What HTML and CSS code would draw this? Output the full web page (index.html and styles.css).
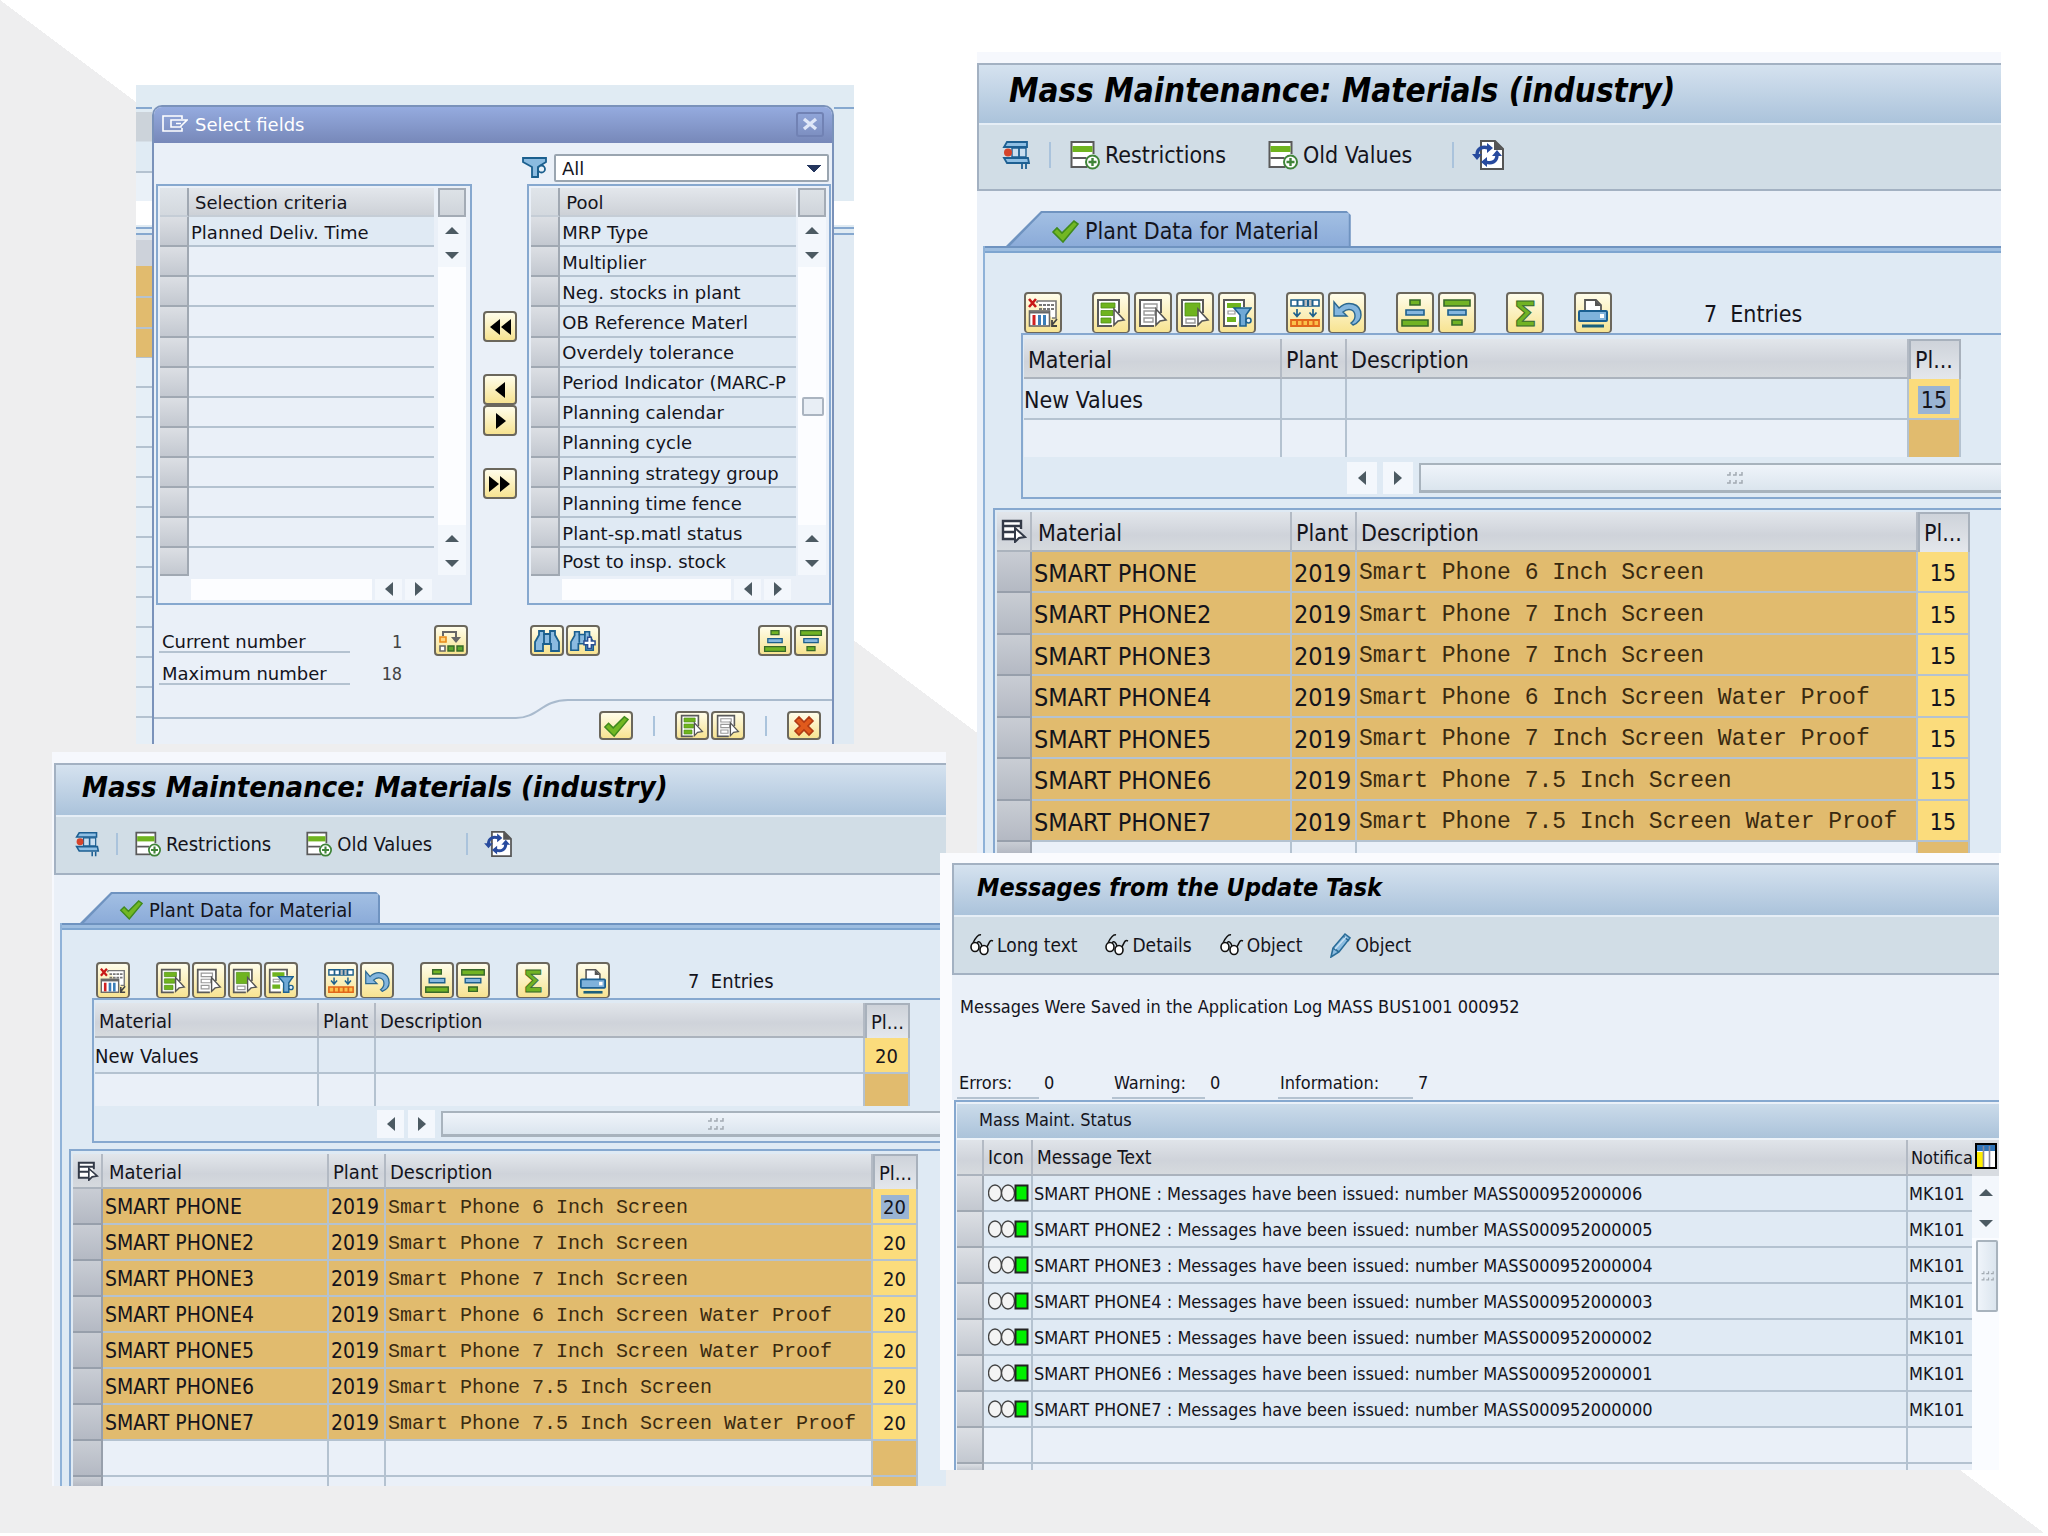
FILE: index.html
```html
<!DOCTYPE html>
<html lang="en">
<head>
<meta charset="utf-8">
<title>Mass Maintenance</title>
<link rel="stylesheet" href="styles.css">
</head>
<body>
<svg class="sprite" aria-hidden="true">
  <symbol id="i-layout" viewBox="0 0 30 30">
    <path d="M9 3h19v17h-4M9 3v2" fill="#fff" stroke="#777" stroke-width="1.6"/>
    <path d="M11 7h15M11 11h15" stroke="#777" stroke-width="2" stroke-dasharray="3 1"/>
    <rect x="1.5" y="13" width="20" height="15" fill="#fff" stroke="#666" stroke-width="1.6"/>
    <path d="M2 14.500h19" stroke="#666" stroke-width="2"/>
    <path d="M6 17v10" stroke="#d02020" stroke-width="3"/>
    <path d="M11.500 17v10M16.500 17v10" stroke="#3a7db8" stroke-width="3"/>
    <path d="M1 1l7 8M8 1l-7 8" stroke="#c81818" stroke-width="2.600"/>
    <path d="M29 21l-5 6M24 22v6h5" fill="none" stroke="#444" stroke-width="1.800"/>
  </symbol>
  <symbol id="i-selall" viewBox="0 0 30 30">
    <path d="M23 15V2H2v26h14" fill="#fff" stroke="#5a5a5a" stroke-width="2"/>
    <path d="M5 5h14v5H5zM5 12.500h12v5H5zM5 20h10v5H5z" fill="#6fb41f" stroke="#4f9016" stroke-width=".8"/>
    <path d="M18 11v16l4-4 6-1z" fill="#fff" stroke="#555" stroke-width="1.600"/>
  </symbol>
  <symbol id="i-selnone" viewBox="0 0 30 30">
    <path d="M23 15V2H2v26h14" fill="#fff" stroke="#5a5a5a" stroke-width="2"/>
    <path d="M6 6h13v4H6zM6 13h11v4H6zM6 20h9v4H6z" fill="#fff" stroke="#999" stroke-width="1.400"/>
    <path d="M18 11v16l4-4 6-1z" fill="#fff" stroke="#555" stroke-width="1.600"/>
  </symbol>
  <symbol id="i-selblock" viewBox="0 0 30 30">
    <path d="M23 15V2H2v26h14" fill="#fff" stroke="#5a5a5a" stroke-width="2"/>
    <path d="M5 5h15v13H5z" fill="#6fb41f" stroke="#4f9016" stroke-width=".8"/>
    <path d="M6 21h9v4H6z" fill="#fff" stroke="#999" stroke-width="1.400"/>
    <path d="M18 11v16l4-4 6-1z" fill="#fff" stroke="#555" stroke-width="1.600"/>
  </symbol>
  <symbol id="i-selfilter" viewBox="0 0 30 30">
    <path d="M22 9V2H2v26h13" fill="#fff" stroke="#5a5a5a" stroke-width="2"/>
    <path d="M5 5h14v5H5zM5 19h9v5H5z" fill="#6fb41f"/>
    <path d="M6 13h7v3H6z" fill="#fff" stroke="#999" stroke-width="1.200"/>
    <path d="M12 10h17l-5 7v11h-6V17z" fill="#6fa9d6" stroke="#1d618f" stroke-width="1.600"/>
    <circle cx="26.500" cy="22.500" r="2.500" fill="#e8f2fa" stroke="#1d618f" stroke-width="1.600"/>
  </symbol>
  <symbol id="i-fill" viewBox="0 0 30 30">
    <path d="M1 2h28v6H1z" fill="#fff" stroke="#1d5f8c" stroke-width="1.600"/>
    <path d="M14 2h8v6h-8z" fill="#bbb"/>
    <path d="M7.500 2v6M13.500 2v6M18 2v6M22.500 2v6" stroke="#1d5f8c" stroke-width="2"/>
    <path d="M7 11v7M3.500 14.500l3.500 4 3.500-4M23 11v7M19.500 14.500l3.500 4 3.500-4" fill="none" stroke="#1d5f8c" stroke-width="1.700"/>
    <path d="M1 22h28v6H1z" fill="#fbc04a" stroke="#e2661a" stroke-width="1.800"/>
    <path d="M7 22v6M12.500 22v6M18 22v6M23.500 22v6" stroke="#e2661a" stroke-width="2"/>
  </symbol>
  <symbol id="i-undo" viewBox="0 0 30 30">
    <path d="M2 4v14h13l-4-4c6-5 12-2 12 4 0 3-1 5-4 7l2 2c5-2 8-5 8-10C29 5 15 2 7 10z" fill="#84b6de" stroke="#2a678f" stroke-width="1.400"/>
  </symbol>
  <symbol id="i-asc" viewBox="0 0 30 30">
    <path d="M10 2h10v5H10zM2 22h26v6H2z" fill="#71b324" stroke="#37692a" stroke-width="1.600"/>
    <path d="M6 12h18v5H6z" fill="#84b6de" stroke="#1d5f8c" stroke-width="1.600"/>
  </symbol>
  <symbol id="i-desc" viewBox="0 0 30 30">
    <path d="M2 2h26v6H2zM10 22h10v5H10z" fill="#71b324" stroke="#37692a" stroke-width="1.600"/>
    <path d="M6 12h18v5H6z" fill="#84b6de" stroke="#1d5f8c" stroke-width="1.600"/>
  </symbol>
  <symbol id="i-print" viewBox="0 0 30 30">
    <path d="M7 14V2h11l5 5v7" fill="#fff" stroke="#555" stroke-width="1.800"/>
    <path d="M17 2v6h6" fill="#555"/>
    <rect x="1" y="13" width="28" height="10" rx="1" fill="#7fb2dc" stroke="#1b5f92" stroke-width="2"/>
    <rect x="22" y="16" width="4" height="4" fill="#fff"/>
    <path d="M4 28h22" stroke="#1b5f7c" stroke-width="3"/>
  </symbol>
  <symbol id="i-clamp" viewBox="0 0 28 30">
    <path d="M5 2h20v5H2zM2 18h24l1 5H5z" fill="#8fbfe4" stroke="#1d5f92" stroke-width="1.800"/>
    <path d="M10 8h14v9H10z" fill="#c9def0" stroke="#1d5f92" stroke-width="1.400"/>
    <path d="M17 8v9M20 24v5M24 24v5" stroke="#1d5f92" stroke-width="1.800"/>
    <circle cx="6" cy="12.500" r="4" fill="#d6432a"/>
  </symbol>
  <symbol id="i-tableadd" viewBox="0 0 31 30">
    <path d="M2 2h22v26H2z" fill="#fff"/>
    <path d="M24 14V2H2v25h16" fill="none" stroke="#5a5a5a" stroke-width="2"/>
    <path d="M3 6h20v6H3z" fill="#6fb41f"/>
    <path d="M3 18h14" stroke="#5a5a5a" stroke-width="2"/>
    <circle cx="23" cy="22" r="6.500" fill="#fff" stroke="#3f8438" stroke-width="2"/>
    <path d="M23 18v8M19 22h8" stroke="#3f8438" stroke-width="2.400"/>
  </symbol>
  <symbol id="i-refresh" viewBox="0 0 32 30">
    <path d="M9 1h14l8 8v20H9z" fill="#fff" stroke="#555" stroke-width="2"/>
    <path d="M22 0l9 10h-9z" fill="#555"/>
    <path d="M5 15c0-7 6-9 11-7M25 15c0 7-6 9-11 7" fill="none" stroke="#274a9e" stroke-width="3.400"/>
    <path d="M0 14h10l-5 6zM20 16h10l-5-6zM15 3l6 5-6 5zM15 17l-6 5 6 5z" fill="#274a9e"/>
  </symbol>
  <symbol id="i-check" viewBox="0 0 28 24">
    <path d="M2 13l4-4 5 5L23 2l4 3-15 18z" fill="#72b723" stroke="#3f8a1c" stroke-width="1.600"/>
  </symbol>
  <symbol id="i-glasses" viewBox="0 0 24 22">
    <path d="M11 1C8 0 5 5 3 9M23 7c-4-2-4 4-7 7" fill="none" stroke="#111" stroke-width="1.500"/>
    <ellipse cx="5" cy="13" rx="4" ry="4.500" fill="#fff" stroke="#111" stroke-width="1.600"/>
    <ellipse cx="14" cy="16" rx="4" ry="4.500" fill="#fff" stroke="#111" stroke-width="1.600"/>
    <path d="M7 9c2-3 4 0 5 3" fill="none" stroke="#111" stroke-width="1.500"/>
  </symbol>
  <symbol id="i-pencil" viewBox="0 0 22 26">
    <path d="M1 25l2-9L15 2l5 4L9 20z" fill="#8bbce0" stroke="#2a6c98" stroke-width="1.600"/>
    <path d="M13 4l6 5M3 16l6 4" stroke="#2a6c98" stroke-width="1.600"/>
    <path d="M5 17L16 5" stroke="#c9e1f3" stroke-width="1.400"/>
  </symbol>
  <symbol id="i-pick" viewBox="0 0 26 24">
    <path d="M20 10V2H2v18h11M2 7h18M2 13h12" fill="#fff" stroke="#333a48" stroke-width="2.400"/>
    <path d="M14 9v14l4-4 6-1z" fill="#fff" stroke="#333a48" stroke-width="2"/>
  </symbol>
  <symbol id="i-exit" viewBox="0 0 26 18">
    <path d="M20 4V1H1v15h19v-3" fill="none" stroke="#fff" stroke-width="1.600"/>
    <path d="M9 5h16l-6 6v1H9zM14 8.500h5" fill="none" stroke="#fff" stroke-width="1.600"/>
  </symbol>
  <symbol id="i-close" viewBox="0 0 16 14">
    <path d="M2 2l12 10M14 2L2 12" stroke="#dfe7f8" stroke-width="3.400"/>
  </symbol>
  <symbol id="i-funnel" viewBox="0 0 26 22">
    <path d="M1 1h23v4l-8 5v10h-6V10L1 5z" fill="#8bbbe0" stroke="#1b5f8e" stroke-width="1.800"/>
    <circle cx="19.500" cy="12" r="3.500" fill="#e6f0f8" stroke="#1b5f8e" stroke-width="1.800"/>
    <path d="M16 14v6" stroke="#1b5f8e" stroke-width="2"/>
  </symbol>
  <symbol id="i-move" viewBox="0 0 26 24">
    <path d="M5 7V3h13v5" fill="none" stroke="#666" stroke-width="2"/>
    <path d="M13 8h10l-5 6z" fill="#666"/>
    <path d="M2 8h6v5H2z" fill="#ffd27a" stroke="#e88a1a" stroke-width="1.600"/>
    <path d="M2 17h5v5H2z" fill="#fff" stroke="#666" stroke-width="1.600"/>
    <path d="M10 17h6v5h-6zM19 17h6v5h-6z" fill="#5ca52c" stroke="#37692a" stroke-width="1.400"/>
  </symbol>
  <symbol id="i-find" viewBox="0 0 26 24">
    <path d="M5 2h5v3h6V2h5v4l4 7v9h-8v-7h-8v7H1v-9l4-7z" fill="#8bbbe0" stroke="#1b5f8e" stroke-width="1.800"/>
    <path d="M10 5v9M16 5v9" stroke="#1b5f8e" stroke-width="1.800"/>
  </symbol>
  <symbol id="i-findnext" viewBox="0 0 28 24">
    <path d="M5 2h5v3h6V2h5v4l4 7v9h-8v-7h-8v7H1v-9l4-7z" fill="#8bbbe0" stroke="#1b5f8e" stroke-width="1.800"/>
    <path d="M10 5v9M16 5v9" stroke="#1b5f8e" stroke-width="1.800"/>
    <path d="M19 8h4v4h4v4h-4v4h-4v-4h-4v-4h4z" fill="#fff" stroke="#2b4f92" stroke-width="1.600"/>
  </symbol>
  <symbol id="i-cancel" viewBox="0 0 26 24">
    <path d="M4 7l4-4 5 5 5-5 4 4-5 5 5 5-4 4-5-5-5 5-4-4 5-5z" fill="#e05a1c" stroke="#b03a14" stroke-width="1.600"/>
  </symbol>
  <symbol id="i-first" viewBox="0 0 26 24"><path d="M13 4v16L3 12zM24 4v16l-10-8z" fill="#000"/></symbol>
  <symbol id="i-prev" viewBox="0 0 26 24"><path d="M18 4v16L8 12z" fill="#000"/></symbol>
  <symbol id="i-next" viewBox="0 0 26 24"><path d="M9 4v16l10-8z" fill="#000"/></symbol>
  <symbol id="i-last" viewBox="0 0 26 24"><path d="M2 4v16l10-8zM13 4v16l10-8z" fill="#000"/></symbol>
  <symbol id="i-up" viewBox="0 0 14 14"><path d="M0 11h14L7 4z" fill="#4c5a62"/></symbol>
  <symbol id="i-down" viewBox="0 0 14 14"><path d="M0 4h14l-7 7z" fill="#4c5a62"/></symbol>
  <symbol id="i-left" viewBox="0 0 14 14"><path d="M11 0v14L3 7z" fill="#4c5a62"/></symbol>
  <symbol id="i-right" viewBox="0 0 14 14"><path d="M3 0v14l8-7z" fill="#4c5a62"/></symbol>
  <symbol id="i-grip" viewBox="0 0 18 14">
    <path d="M2 4h3V1M8 4h3V1M14 4h3V1M2 12h3V9M8 12h3V9M14 12h3V9" fill="none" stroke="#a3abb3" stroke-width="1.500"/>
  </symbol>
  <symbol id="i-config" viewBox="0 0 22 26">
    <path d="M1 1h20v24H1z" fill="#fff" stroke="#000" stroke-width="2"/>
    <path d="M2 2h18v6H2z" fill="#2f74b8"/>
    <path d="M2 9h6v15H2z" fill="#ffee00"/>
    <path d="M8.500 3v21M14.500 3v21" stroke="#889" stroke-width="1.600"/>
  </symbol>
  <symbol id="i-light" viewBox="0 0 41 18">
    <ellipse cx="7" cy="9" rx="6.500" ry="8" fill="#f4f4f4" stroke="#444" stroke-width="1.400"/>
    <ellipse cx="20" cy="9" rx="6.500" ry="8" fill="#f4f4f4" stroke="#444" stroke-width="1.400"/>
    <path d="M27.500 1.500h12v15h-12z" fill="#00f000" stroke="#222" stroke-width="2"/>
  </symbol>
</svg>

<main class="canvas">
  <div class="col col--left">

    <section class="shot" aria-label="Select fields">
      <div class="strip strip--left"></div>
      <div class="dialog">
        <header class="dialog-title">
          <svg class="ic-exit"><use href="#i-exit"/></svg>
          <h2>Select fields</h2>
          <button class="close" aria-label="Close"><svg class="ic-close"><use href="#i-close"/></svg></button>
        </header>
        <div class="filter">
          <svg class="ic-funnel"><use href="#i-funnel"/></svg>
          <select aria-label="Filter"><option>All</option></select>
        </div>
        <div class="lists">
          <div class="list list--left">
            <table class="fields">
              <thead><tr><th class="sel"></th><th>Selection criteria</th></tr></thead>
              <tbody>
                <tr class="filled"><td class="sel"></td><td>Planned Deliv. Time</td></tr>
                <tr><td class="sel"></td><td></td></tr>
                <tr><td class="sel"></td><td></td></tr>
                <tr><td class="sel"></td><td></td></tr>
                <tr><td class="sel"></td><td></td></tr>
                <tr><td class="sel"></td><td></td></tr>
                <tr><td class="sel"></td><td></td></tr>
                <tr><td class="sel"></td><td></td></tr>
                <tr><td class="sel"></td><td></td></tr>
                <tr><td class="sel"></td><td></td></tr>
                <tr><td class="sel"></td><td></td></tr>
                <tr><td class="sel"></td><td></td></tr>
              </tbody>
            </table>
            <div class="vbar">
              <button class="corner" aria-label="Configure"></button>
              <button class="arrow" aria-label="Up"><svg><use href="#i-up"/></svg></button>
              <button class="arrow" aria-label="Down"><svg><use href="#i-down"/></svg></button>
              <div class="track"></div>
              <button class="arrow" aria-label="Page up"><svg><use href="#i-up"/></svg></button>
              <button class="arrow" aria-label="Page down"><svg><use href="#i-down"/></svg></button>
            </div>
            <div class="hbar">
              <div class="track"></div>
              <button class="arrow" aria-label="Left"><svg><use href="#i-left"/></svg></button>
              <button class="arrow" aria-label="Right"><svg><use href="#i-right"/></svg></button>
            </div>
          </div>
          <div class="movers">
            <button class="btn" aria-label="Move all left"><svg><use href="#i-first"/></svg></button>
            <div class="pair">
              <button class="btn" aria-label="Move left"><svg><use href="#i-prev"/></svg></button>
              <button class="btn" aria-label="Move right"><svg><use href="#i-next"/></svg></button>
            </div>
            <button class="btn" aria-label="Move all right"><svg><use href="#i-last"/></svg></button>
          </div>
          <div class="list list--right">
            <table class="fields">
              <thead><tr><th class="sel"></th><th>Pool</th></tr></thead>
              <tbody>
                <tr class="filled"><td class="sel"></td><td>MRP Type</td></tr>
                <tr class="filled"><td class="sel"></td><td>Multiplier</td></tr>
                <tr class="filled"><td class="sel"></td><td>Neg. stocks in plant</td></tr>
                <tr class="filled"><td class="sel"></td><td>OB Reference Materl</td></tr>
                <tr class="filled"><td class="sel"></td><td>Overdely tolerance</td></tr>
                <tr class="filled"><td class="sel"></td><td>Period Indicator (MARC-P</td></tr>
                <tr class="filled"><td class="sel"></td><td>Planning calendar</td></tr>
                <tr class="filled"><td class="sel"></td><td>Planning cycle</td></tr>
                <tr class="filled"><td class="sel"></td><td>Planning strategy group</td></tr>
                <tr class="filled"><td class="sel"></td><td>Planning time fence</td></tr>
                <tr class="filled"><td class="sel"></td><td>Plant-sp.matl status</td></tr>
                <tr class="filled"><td class="sel"></td><td>Post to insp. stock</td></tr>
              </tbody>
            </table>
            <div class="vbar">
              <button class="corner" aria-label="Configure"></button>
              <button class="arrow" aria-label="Up"><svg><use href="#i-up"/></svg></button>
              <button class="arrow" aria-label="Down"><svg><use href="#i-down"/></svg></button>
              <div class="track"><div class="thumb"></div></div>
              <button class="arrow" aria-label="Page up"><svg><use href="#i-up"/></svg></button>
              <button class="arrow" aria-label="Page down"><svg><use href="#i-down"/></svg></button>
            </div>
            <div class="hbar">
              <div class="track"></div>
              <button class="arrow" aria-label="Left"><svg><use href="#i-left"/></svg></button>
              <button class="arrow" aria-label="Right"><svg><use href="#i-right"/></svg></button>
            </div>
          </div>
        </div>
        <div class="summary">
          <dl class="counts">
            <dt>Current number</dt><dd>1</dd>
            <dt>Maximum number</dt><dd>18</dd>
          </dl>
          <button class="btn" aria-label="Reassign"><svg><use href="#i-move"/></svg></button>
          <div class="tools tools--find">
            <button class="btn" aria-label="Find"><svg><use href="#i-find"/></svg></button>
            <button class="btn" aria-label="Find next"><svg><use href="#i-findnext"/></svg></button>
          </div>
          <div class="tools tools--sort">
            <button class="btn" aria-label="Sort ascending"><svg><use href="#i-asc"/></svg></button>
            <button class="btn" aria-label="Sort descending"><svg><use href="#i-desc"/></svg></button>
          </div>
        </div>
        <footer class="actions">
          <div class="edge">
            <div class="edge-low"></div>
            <svg viewBox="0 0 52 20"><path d="M0 19C22 19 26 1 52 1" fill="none" stroke="#a9bacd" stroke-width="2"/></svg>
            <div class="edge-high"></div>
          </div>
          <button class="btn" aria-label="Accept"><svg><use href="#i-check"/></svg></button>
          <i class="sep"></i>
          <div class="tools">
            <button class="btn" aria-label="Select all"><svg><use href="#i-selall"/></svg></button>
            <button class="btn" aria-label="Deselect all"><svg><use href="#i-selnone"/></svg></button>
          </div>
          <i class="sep"></i>
          <button class="btn" aria-label="Cancel"><svg><use href="#i-cancel"/></svg></button>
        </footer>
      </div>
      <div class="strip strip--right"></div>
    </section>

    <section class="mass mass--small">
      <div class="frame">
        <h1 class="bar">Mass Maintenance: Materials (industry)</h1>
        <nav class="toolbar">
          <button class="tool" aria-label="Variants"><svg class="ic-clamp"><use href="#i-clamp"/></svg></button>
          <i class="sep"></i>
          <button class="tool"><svg><use href="#i-tableadd"/></svg>Restrictions</button>
          <button class="tool tool--next"><svg><use href="#i-tableadd"/></svg>Old Values</button>
          <i class="sep sep--far"></i>
          <button class="tool" aria-label="Refresh"><svg><use href="#i-refresh"/></svg></button>
        </nav>
      </div>
      <div class="tabs"><a class="tab" href="#plant-b"><span><svg><use href="#i-check"/></svg>Plant Data for Material</span></a></div>
      <div class="pane" id="plant-b">
        <div class="buttons">
          <div class="tools"><button class="btn" aria-label="Layout"><svg><use href="#i-layout"/></svg></button></div>
          <div class="tools">
            <button class="btn" aria-label="Select all"><svg><use href="#i-selall"/></svg></button>
            <button class="btn" aria-label="Deselect all"><svg><use href="#i-selnone"/></svg></button>
            <button class="btn" aria-label="Select block"><svg><use href="#i-selblock"/></svg></button>
            <button class="btn" aria-label="Select by filter"><svg><use href="#i-selfilter"/></svg></button>
          </div>
          <div class="tools">
            <button class="btn" aria-label="Fill column"><svg><use href="#i-fill"/></svg></button>
            <button class="btn" aria-label="Undo"><svg><use href="#i-undo"/></svg></button>
          </div>
          <div class="tools">
            <button class="btn" aria-label="Sort ascending"><svg><use href="#i-asc"/></svg></button>
            <button class="btn" aria-label="Sort descending"><svg><use href="#i-desc"/></svg></button>
          </div>
          <div class="tools"><button class="btn" aria-label="Sum"><svg viewBox="0 0 30 30"><text x="15" y="28" text-anchor="middle" class="sigma">Σ</text></svg></button></div>
          <div class="tools"><button class="btn" aria-label="Print"><svg><use href="#i-print"/></svg></button></div>
          <span class="entries">7&nbsp; Entries</span>
        </div>
        <div class="box box--new">
          <table class="grid">
            <colgroup><col class="c-mat"><col class="c-plant"><col><col class="c-pl"></colgroup>
            <thead><tr><th>Material</th><th>Plant</th><th>Description</th><th class="pl">Pl...</th></tr></thead>
            <tbody>
              <tr><td>New Values</td><td></td><td></td><td class="pl"><input aria-label="New value" value="20"></td></tr>
              <tr class="blank"><td></td><td></td><td></td><td class="pl-off"></td></tr>
            </tbody>
          </table>
          <div class="slider">
            <button class="arrow" aria-label="Left"><svg><use href="#i-left"/></svg></button>
            <button class="arrow" aria-label="Right"><svg><use href="#i-right"/></svg></button>
            <div class="thumb"><svg><use href="#i-grip"/></svg></div>
          </div>
        </div>
        <div class="box box--rows">
          <table class="grid grid--rows">
            <colgroup><col class="c-sel"><col class="c-mat"><col class="c-plant"><col><col class="c-pl"></colgroup>
            <thead><tr><th class="pick"><svg><use href="#i-pick"/></svg></th><th>Material</th><th>Plant</th><th>Description</th><th class="pl">Pl...</th></tr></thead>
            <tbody>
              <tr><td class="sel"></td><td>SMART PHONE</td><td>2019</td><td class="mono">Smart Phone 6 Inch Screen</td><td class="pl"><input class="picked" aria-label="SMART PHONE" value="20"></td></tr>
              <tr><td class="sel"></td><td>SMART PHONE2</td><td>2019</td><td class="mono">Smart Phone 7 Inch Screen</td><td class="pl"><input aria-label="SMART PHONE2" value="20"></td></tr>
              <tr><td class="sel"></td><td>SMART PHONE3</td><td>2019</td><td class="mono">Smart Phone 7 Inch Screen</td><td class="pl"><input aria-label="SMART PHONE3" value="20"></td></tr>
              <tr><td class="sel"></td><td>SMART PHONE4</td><td>2019</td><td class="mono">Smart Phone 6 Inch Screen Water Proof</td><td class="pl"><input aria-label="SMART PHONE4" value="20"></td></tr>
              <tr><td class="sel"></td><td>SMART PHONE5</td><td>2019</td><td class="mono">Smart Phone 7 Inch Screen Water Proof</td><td class="pl"><input aria-label="SMART PHONE5" value="20"></td></tr>
              <tr><td class="sel"></td><td>SMART PHONE6</td><td>2019</td><td class="mono">Smart Phone 7.5 Inch Screen</td><td class="pl"><input aria-label="SMART PHONE6" value="20"></td></tr>
              <tr><td class="sel"></td><td>SMART PHONE7</td><td>2019</td><td class="mono">Smart Phone 7.5 Inch Screen Water Proof</td><td class="pl"><input aria-label="SMART PHONE7" value="20"></td></tr>
              <tr class="blank"><td class="sel"></td><td></td><td></td><td></td><td class="pl-off"></td></tr>
              <tr class="blank cut"><td class="sel"></td><td></td><td></td><td></td><td class="pl-off"></td></tr>
            </tbody>
          </table>
        </div>
      </div>
    </section>
  </div>

  <div class="col col--right">
    <section class="mass mass--large">
      <div class="frame">
        <h1 class="bar">Mass Maintenance: Materials (industry)</h1>
        <nav class="toolbar">
          <button class="tool" aria-label="Variants"><svg class="ic-clamp"><use href="#i-clamp"/></svg></button>
          <i class="sep"></i>
          <button class="tool"><svg><use href="#i-tableadd"/></svg>Restrictions</button>
          <button class="tool tool--next"><svg><use href="#i-tableadd"/></svg>Old Values</button>
          <i class="sep sep--far"></i>
          <button class="tool" aria-label="Refresh"><svg><use href="#i-refresh"/></svg></button>
        </nav>
      </div>
      <div class="tabs"><a class="tab" href="#plant-a"><span><svg><use href="#i-check"/></svg>Plant Data for Material</span></a></div>
      <div class="pane" id="plant-a">
        <div class="buttons">
          <div class="tools"><button class="btn" aria-label="Layout"><svg><use href="#i-layout"/></svg></button></div>
          <div class="tools">
            <button class="btn" aria-label="Select all"><svg><use href="#i-selall"/></svg></button>
            <button class="btn" aria-label="Deselect all"><svg><use href="#i-selnone"/></svg></button>
            <button class="btn" aria-label="Select block"><svg><use href="#i-selblock"/></svg></button>
            <button class="btn" aria-label="Select by filter"><svg><use href="#i-selfilter"/></svg></button>
          </div>
          <div class="tools">
            <button class="btn" aria-label="Fill column"><svg><use href="#i-fill"/></svg></button>
            <button class="btn" aria-label="Undo"><svg><use href="#i-undo"/></svg></button>
          </div>
          <div class="tools">
            <button class="btn" aria-label="Sort ascending"><svg><use href="#i-asc"/></svg></button>
            <button class="btn" aria-label="Sort descending"><svg><use href="#i-desc"/></svg></button>
          </div>
          <div class="tools"><button class="btn" aria-label="Sum"><svg viewBox="0 0 30 30"><text x="15" y="28" text-anchor="middle" class="sigma">Σ</text></svg></button></div>
          <div class="tools"><button class="btn" aria-label="Print"><svg><use href="#i-print"/></svg></button></div>
          <span class="entries">7&nbsp; Entries</span>
        </div>
        <div class="box box--new">
          <table class="grid">
            <colgroup><col class="c-mat"><col class="c-plant"><col><col class="c-pl"></colgroup>
            <thead><tr><th>Material</th><th>Plant</th><th>Description</th><th class="pl">Pl...</th></tr></thead>
            <tbody>
              <tr><td>New Values</td><td></td><td></td><td class="pl"><input class="picked" aria-label="New value" value="15"></td></tr>
              <tr class="blank"><td></td><td></td><td></td><td class="pl-off"></td></tr>
            </tbody>
          </table>
          <div class="slider">
            <button class="arrow" aria-label="Left"><svg><use href="#i-left"/></svg></button>
            <button class="arrow" aria-label="Right"><svg><use href="#i-right"/></svg></button>
            <div class="thumb"><svg><use href="#i-grip"/></svg></div>
          </div>
        </div>
        <div class="box box--rows">
          <table class="grid grid--rows">
            <colgroup><col class="c-sel"><col class="c-mat"><col class="c-plant"><col><col class="c-pl"></colgroup>
            <thead><tr><th class="pick"><svg><use href="#i-pick"/></svg></th><th>Material</th><th>Plant</th><th>Description</th><th class="pl">Pl...</th></tr></thead>
            <tbody>
              <tr><td class="sel"></td><td>SMART PHONE</td><td>2019</td><td class="mono">Smart Phone 6 Inch Screen</td><td class="pl"><input aria-label="SMART PHONE" value="15"></td></tr>
              <tr><td class="sel"></td><td>SMART PHONE2</td><td>2019</td><td class="mono">Smart Phone 7 Inch Screen</td><td class="pl"><input aria-label="SMART PHONE2" value="15"></td></tr>
              <tr><td class="sel"></td><td>SMART PHONE3</td><td>2019</td><td class="mono">Smart Phone 7 Inch Screen</td><td class="pl"><input aria-label="SMART PHONE3" value="15"></td></tr>
              <tr><td class="sel"></td><td>SMART PHONE4</td><td>2019</td><td class="mono">Smart Phone 6 Inch Screen Water Proof</td><td class="pl"><input aria-label="SMART PHONE4" value="15"></td></tr>
              <tr><td class="sel"></td><td>SMART PHONE5</td><td>2019</td><td class="mono">Smart Phone 7 Inch Screen Water Proof</td><td class="pl"><input aria-label="SMART PHONE5" value="15"></td></tr>
              <tr><td class="sel"></td><td>SMART PHONE6</td><td>2019</td><td class="mono">Smart Phone 7.5 Inch Screen</td><td class="pl"><input aria-label="SMART PHONE6" value="15"></td></tr>
              <tr><td class="sel"></td><td>SMART PHONE7</td><td>2019</td><td class="mono">Smart Phone 7.5 Inch Screen Water Proof</td><td class="pl"><input aria-label="SMART PHONE7" value="15"></td></tr>
              <tr class="blank cut"><td class="sel"></td><td></td><td></td><td></td><td class="pl-off"></td></tr>
            </tbody>
          </table>
        </div>
      </div>
    </section>

    <section class="log">
      <div class="frame">
        <h1 class="bar">Messages from the Update Task</h1>
        <nav class="toolbar">
          <button class="tool"><svg><use href="#i-glasses"/></svg>Long text</button>
          <button class="tool"><svg><use href="#i-glasses"/></svg>Details</button>
          <button class="tool"><svg><use href="#i-glasses"/></svg>Object</button>
          <button class="tool"><svg class="ic-pencil"><use href="#i-pencil"/></svg>Object</button>
        </nav>
      </div>
      <p class="saved">Messages Were Saved in the Application Log MASS BUS1001 000952</p>
      <dl class="totals">
        <dt class="t-err">Errors:</dt><dd>0</dd>
        <dt class="t-warn">Warning:</dt><dd>0</dd>
        <dt class="t-info">Information:</dt><dd>7</dd>
      </dl>
      <div class="status">
        <h2 class="status-title">Mass Maint. Status</h2>
        <div class="status-body">
          <table class="messages">
            <colgroup><col class="m-sel"><col class="m-icon"><col><col class="m-note"></colgroup>
            <thead><tr><th></th><th>Icon</th><th>Message Text</th><th>Notifica</th></tr></thead>
            <tbody>
              <tr><td class="sel"></td><td><svg><use href="#i-light"/></svg></td><td>SMART PHONE : Messages have been issued: number MASS000952000006</td><td>MK101</td></tr>
              <tr><td class="sel"></td><td><svg><use href="#i-light"/></svg></td><td>SMART PHONE2 : Messages have been issued: number MASS000952000005</td><td>MK101</td></tr>
              <tr><td class="sel"></td><td><svg><use href="#i-light"/></svg></td><td>SMART PHONE3 : Messages have been issued: number MASS000952000004</td><td>MK101</td></tr>
              <tr><td class="sel"></td><td><svg><use href="#i-light"/></svg></td><td>SMART PHONE4 : Messages have been issued: number MASS000952000003</td><td>MK101</td></tr>
              <tr><td class="sel"></td><td><svg><use href="#i-light"/></svg></td><td>SMART PHONE5 : Messages have been issued: number MASS000952000002</td><td>MK101</td></tr>
              <tr><td class="sel"></td><td><svg><use href="#i-light"/></svg></td><td>SMART PHONE6 : Messages have been issued: number MASS000952000001</td><td>MK101</td></tr>
              <tr><td class="sel"></td><td><svg><use href="#i-light"/></svg></td><td>SMART PHONE7 : Messages have been issued: number MASS000952000000</td><td>MK101</td></tr>
              <tr class="blank"><td class="sel"></td><td></td><td></td><td></td></tr>
              <tr class="blank cut"><td class="sel"></td><td></td><td></td><td></td></tr>
            </tbody>
          </table>
          <div class="vscroll">
            <button class="config" aria-label="Table settings"><svg><use href="#i-config"/></svg></button>
            <button class="arrow" aria-label="Up"><svg><use href="#i-up"/></svg></button>
            <button class="arrow" aria-label="Down"><svg><use href="#i-down"/></svg></button>
            <div class="thumb"><svg><use href="#i-grip"/></svg></div>
          </div>
        </div>
      </div>
    </section>
  </div>
</main>
</body>
</html>
```
FILE: styles.css
```css
* { box-sizing: border-box; }

:root {
  --ui: "DejaVu Sans Condensed", "DejaVu Sans", sans-serif;
  --wide: "DejaVu Sans", sans-serif;
  --mono: "Liberation Mono", monospace;
  --line: #b4c2d0;
  --blue: #86a8cf;
  --pale: #e0eaf4;
  --paper: #eaf0f8;
  --amber: #e1bb6e;
  --yellow: #fbdc7c;
}

body {
  margin: 0;
  min-height: 100vh;
  border-bottom: 3px solid #fff;
  background: linear-gradient(to top right, #eeeeef 50%, #fff 50%);
  color: #14141c;
  font-family: var(--ui);
}

h1, h2, p, dl, dd { margin: 0; }
h1, h2 { font-size: inherit; font-weight: normal; }
table { border-collapse: separate; border-spacing: 0; table-layout: fixed; width: 100%; }
th, td { padding: 0; text-align: left; font-weight: normal; white-space: nowrap; overflow: hidden; }
button { padding: 0; border: 0; background: none; color: inherit; font: inherit; }
svg { display: block; flex: none; }
.sprite { display: none; }
.sigma { font: bold 34px "DejaVu Sans", sans-serif; fill: #71b324; stroke: #37692a; stroke-width: 1px; }

.canvas {
  display: grid;
  grid-template-columns: minmax(0, 894fr) minmax(0, 1055fr);
  padding: 0 47px 0 52px;
}
.col { display: flex; flex-direction: column; }
.col--left { padding-top: 85px; gap: 8px; }
.col--right { padding-top: 52px; margin-left: -6px; }

/* Shared controls */
.btn {
  display: flex;
  align-items: center;
  justify-content: center;
  width: 34px;
  height: 31px;
  border: 2px solid #6b675c;
  border-radius: 4px;
  background: linear-gradient(#fffdea, #f7e391);
}
.btn svg { width: 26px; height: 24px; }
.tools { display: flex; gap: 2px; }
.arrow { display: flex; align-items: center; justify-content: center; background: #f3f7fc; }
.arrow svg { width: 14px; height: 14px; }
.sep { width: 2px; height: 20px; background: #aac3dc; }
.sel { background: linear-gradient(#dcdfe4, #c3c8d0); border-right: 2px solid #a0a8b2; border-bottom: 2px solid #a0a8b2; }

/* Select fields dialog */
.shot {
  display: flex;
  height: 659px;
  margin: 0 92px 0 84px;
  background: #e0ebf3;
  font-family: var(--wide);
  font-size: 18px;
}
.strip--left {
  width: 16px;
  background:
    linear-gradient(#e0ebf3 0 22px, var(--blue) 22px 24px, #e0ebf3 24px 27px, #ccd3da 27px 56px, #e0ebf4 57px 86px, var(--line) 86px 88px, #eaf1f8 88px 116px, #fff 116px 140px, #e0ebf3 140px 142px, var(--blue) 142px 144px, #e0ebf3 144px 148px, var(--blue) 148px 150px, #dde3ea 150px 155px, #cdd2da 155px 181px, var(--amber) 181px 211px, var(--line) 211px 213px, var(--amber) 213px 242px, var(--line) 242px 244px, var(--amber) 244px 272px, transparent 272px),
    repeating-linear-gradient(#e6eff7 0 1px, var(--line) 1px 3px, #e6eff7 3px 30px);
}
.strip--right {
  width: 20px;
  background: linear-gradient(#e0ebf3 0 22px, var(--blue) 22px 24px, #e0ebf3 24px 116px, #fff 116px 140px, #e0ebf3 140px 142px, var(--blue) 142px 144px, #e0ebf3 144px 148px, var(--blue) 148px 150px, #e0eaf3 150px);
}
.dialog {
  flex: 1;
  min-width: 0;
  display: flex;
  flex-direction: column;
  margin-top: 20px;
  border: 2px solid #7a92ba;
  border-bottom: 0;
  border-radius: 10px 10px 0 0;
  background: var(--paper);
}
.dialog-title {
  display: flex;
  align-items: center;
  height: 36px;
  padding: 0 8px 2px;
  border-radius: 8px 8px 0 0;
  background: linear-gradient(#95abdf, #7788b9);
  color: #fff;
}
.dialog-title h2 { flex: 1; margin-left: 7px; }
.ic-exit { width: 26px; height: 18px; }
.close { display: flex; align-items: center; justify-content: center; width: 28px; height: 25px; border: 2px solid #7182b4; border-radius: 3px; }
.ic-close { width: 16px; height: 14px; }
.filter { display: flex; align-items: center; justify-content: flex-end; gap: 6px; height: 41px; padding: 11px 3px 2px 0; }
.ic-funnel { width: 26px; height: 22px; }
.filter select {
  width: 275px;
  height: 28px;
  padding: 0 6px;
  border: 2px solid #9aa5b0;
  border-radius: 2px;
  appearance: none;
  background:
    linear-gradient(to top right, transparent 50%, #25365e 50%) right 13px center / 7px 7px no-repeat,
    linear-gradient(to top left, transparent 50%, #25365e 50%) right 6px center / 7px 7px no-repeat,
    #fff;
  color: #14141c;
  font: inherit;
}
.lists { display: flex; padding: 0 1px 0 2px; }
.list {
  display: grid;
  grid-template-columns: minmax(0, 1fr) 28px;
  column-gap: 4px;
  height: 421px;
  padding: 2px 4px 3px 2px;
  border: 2px solid var(--blue);
}
.list--left { flex: 316; }
.list--right { flex: 304; column-gap: 2px; padding-right: 3px; }
.fields th, .fields td { height: 30px; padding-top: 2px; border-bottom: 2px solid var(--line); }
.fields th { height: 29px; padding-left: 6px; background: linear-gradient(#e3e7ec, #cdd1d7); border-bottom-color: #c5cdd6; }
.fields th.sel { width: 29px; background: linear-gradient(#e0e5ea, #d3d8de); }
.fields td { padding-left: 2px; }
.fields td.sel { border-color: #a0a8b2; }
.fields tr:last-child td { height: 27px; line-height: 20px; border-bottom-color: transparent; }
.fields tr:last-child td.sel { border-bottom-color: #a0a8b2; }
.fields .filled td:not(.sel) { background: var(--pale); }
.vbar { display: flex; flex-direction: column; height: 387px; }
.vbar .corner { height: 29px; border: 2px solid #a3abb5; background: linear-gradient(#dde2e7, #cfd4da); }
.vbar .arrow { height: 25px; }
.vbar .track { flex: 1; background: #fcfdff; padding-top: 130px; }
.vbar .thumb { height: 19px; margin: 0 2px 0 4px; border: 2px solid #aab4c0; border-radius: 2px; background: #e8eef5; }
.hbar { display: flex; gap: 3px; height: 21px; margin: 3px 2px 0 31px; }
.list--right .hbar { margin-right: 5px; }
.hbar .track { flex: 1; background: #fcfdff; }
.hbar .arrow { width: 27px; }
.movers { display: flex; flex-direction: column; align-items: center; gap: 32px; flex: 0 0 55px; padding-top: 127px; }
.summary { display: flex; height: 94px; padding: 20px 4px 0 5px; }
.counts { display: grid; grid-template-columns: 191px 52px; row-gap: 4px; width: 275px; align-content: start; }
.counts dt { height: 28px; padding: 5px 0 0 3px; line-height: 24px; border-bottom: 2px solid var(--line); }
.counts dd { line-height: 34px; height: 28px; text-align: right; font-family: "DejaVu Sans Mono", monospace; font-size: 17px; color: #444; }
.tools--find { margin-left: 62px; }
.tools--sort { margin-left: auto; }
.actions { position: relative; flex: 1; display: flex; align-items: center; justify-content: flex-end; padding: 8px 11px 0 0; }
.actions .sep { margin: 0 20px; }
.actions .btn { height: 29px; }
.edge { position: absolute; inset: 0 0 auto 0; display: flex; height: 20px; }
.edge svg { width: 52px; height: 20px; }
.edge-low { flex: 363; border-bottom: 2px solid #a9bacd; }
.edge-high { flex: 265; border-top: 2px solid #a9bacd; }

/* Title bar and toolbar common to the transaction windows */
.frame { border: 2px solid #a3b1c2; border-right: 0; }
.bar {
  height: var(--bar-h);
  padding-left: var(--bar-x);
  border-bottom: 2px solid #e6eef6;
  background: linear-gradient(#d5e2ef, #abc3db);
  color: #000;
  font-size: var(--bar-size);
  font-weight: bold;
  font-style: italic;
  line-height: var(--bar-line);
  white-space: nowrap;
}
.toolbar { display: flex; align-items: center; background: #d1dde6; }
.tool { display: flex; align-items: center; gap: 4px; }

/* Mass maintenance window, in two magnifications */
.mass { padding-top: 11px; background: #f6f8fd; font-size: var(--size); }
.mass--large {
  --size: 23px; --data: 25px; --bar-h: 60px; --bar-x: 30px; --bar-size: 33px; --bar-line: 51px;
  --icon: 30px; --btn-w: 38px; --btn-h: 41px; --head-h: 40px;
  margin-left: 37px;
}
.mass--small {
  --size: 20px; --data: 21px; --bar-h: 52px; --bar-x: 26px; --bar-size: 29px; --bar-line: 45px;
  --icon: 26px; --btn-w: 34px; --btn-h: 36px; --head-h: 35px;
  padding-left: 2px;
}
.mass .toolbar { height: 64px; padding: 0 22px; padding-bottom: 4px; }
.mass--small .toolbar { height: 56px; padding: 0 18px 3px; }
.mass .tool svg { width: calc(var(--icon) + 2px); height: var(--icon); }
.mass .tool .ic-clamp { width: var(--icon); }
.mass .toolbar .sep { height: 26px; margin: 0 18px; }
.mass--small .toolbar .sep { height: 22px; margin: 0 16px; }
.mass .tool--next { margin-left: 41px; }
.mass--small .tool--next { margin-left: 34px; }
.mass .toolbar .sep--far { margin-left: 40px; }
.mass--small .toolbar .sep--far { margin-left: 34px; }

.tabs { display: flex; padding: 20px 0 0 29px; background: var(--paper); }
.mass--small .tabs { padding: 17px 0 0 26px; }
.tab {
  height: 35px;
  padding: 2px 2px 0 2px;
  background: #6f93c0;
  clip-path: polygon(35px 0, calc(100% - 4px) 0, 100% 4px, 100% 100%, 0 100%);
  color: inherit;
  text-decoration: none;
}
.tab span {
  display: flex;
  align-items: center;
  gap: 6px;
  height: 35px;
  padding: 1px 30px 0 43px;
  background: linear-gradient(#a2bfe3, #8aaad8);
  clip-path: polygon(34px 0, 100% 0, 100% 100%, 0 100%);
}
.tab svg { width: 28px; height: 24px; }
.mass--small .tab { height: 31px; clip-path: polygon(31px 0, calc(100% - 4px) 0, 100% 4px, 100% 100%, 0 100%); }
.mass--small .tab span { height: 31px; padding: 0 26px 0 37px; clip-path: polygon(30px 0, 100% 0, 100% 100%, 0 100%); }
.mass--small .tab svg { width: 24px; height: 21px; }

.pane {
  position: relative;
  border-left: 2px solid #8fb2d8;
  background: linear-gradient(#6f93c0 0 2px, #9dbde0 2px 5px, #7ea5d0 5px 7px, #dfeaf4 7px);
  box-shadow: -6px 0 0 var(--paper);
  margin-left: 6px;
  padding-top: 46px;
}
.mass--small .pane { margin-left: 6px; padding-top: 39px; }
.buttons { display: flex; align-items: center; gap: 30px; padding-left: 39px; }
.mass--small .buttons { gap: 26px; padding-left: 34px; }
.buttons .tools { gap: 4px; }
.mass--small .buttons .tools { gap: 2px; }
.buttons .btn { width: var(--btn-w); height: var(--btn-h); border-bottom-width: 1px; }
.buttons .btn svg { width: var(--icon); height: var(--icon); }
.entries { margin-left: 62px; padding-top: 2px; line-height: 28px; }
.mass--small .entries { margin-left: 52px; }

.box { border: 2px solid var(--blue); border-right: 0; }
.box--new { margin: 0 0 9px 36px; padding: 4px 0 3px 1px; }
.mass--small .box--new { margin: 0 0 6px 30px; padding-top: 3px; }
.box--rows { margin-left: 8px; padding: 2px 0 0 2px; border-bottom: 0; }
.mass--small .box--rows { margin-left: 7px; padding-top: 3px; }

.grid { width: calc(100% - 40px); }
.grid--rows { width: calc(100% - 31px); }
.mass--small .grid { width: calc(100% - 36px); }
.mass--small .grid--rows { width: calc(100% - 28px); }
.c-sel { width: 35px; } .c-mat { width: 258px; } .c-plant { width: 65px; } .c-pl { width: 52px; }
.grid--rows .c-mat { width: 260px; }
.mass--small .c-sel { width: 30px; } .mass--small .c-mat { width: 224px; } .mass--small .c-plant { width: 57px; } .mass--small .c-pl { width: 45px; }
.mass--small .grid--rows .c-mat { width: 226px; }

.grid th { height: var(--head-h); padding: 3px 0 0 4px; background: linear-gradient(#e2e6eb, #cfd3da 60%, #d6dade); border-right: 2px solid #b3bac4; border-bottom: 2px solid #abb3bd; }
.mass--small .grid th { padding-top: 2px; }
.grid--rows th:nth-child(2) { padding-left: 6px; }
.grid th:last-child { padding-top: 0; border: 2px solid #a8b1bc; border-bottom: 0; background: linear-gradient(#ced3da, #e4e7ec); }
.grid td { height: 41px; padding-top: 3px; border-right: 2px solid var(--line); border-bottom: 2px solid var(--line); background: var(--pale); }
.mass--small .grid td { height: 36px; padding-top: 2px; }
.grid .blank td { height: 37px; background: var(--paper); border-bottom: 0; }
.mass--small .grid .blank td { height: 32px; }
.grid--rows td { padding-left: 2px; background: var(--amber); font-size: var(--data); }
.mass--large .grid--rows tr:nth-child(even) td { height: 42px; }
.mass--small .grid--rows .blank td { height: 36px; border-bottom: 2px solid var(--line); }
.mass--large .grid--rows .blank.cut td { height: 11px; padding: 0; }
.mass--small .grid--rows .blank.cut td { height: 9px; padding: 0; border-bottom: 0; }
.grid td.sel, .grid--rows .blank td.sel { background: linear-gradient(#c9cdd4, #b4b9c3); border-color: #979fab; }
.grid th.pick, .mass--small .grid th.pick { padding: 0; }
.pick svg { width: 26px; height: 24px; margin-left: 4px; }
.mass--small .pick svg { width: 22px; height: 20px; }
.grid td.mono { font-family: var(--mono); font-size: var(--size); color: #3a2a10; }
.grid td.pl { padding-left: 0; background: var(--yellow); }
.grid .blank td.pl-off { background: var(--amber); }
.pl input {
  display: block;
  width: 32px;
  height: 28px;
  margin: 0 auto;
  padding: 0;
  border: 0;
  background: none;
  color: inherit;
  font-family: inherit;
  font-size: var(--size);
  text-align: center;
}
.mass--small .pl input { width: 28px; height: 24px; }
.pl .picked { background: #9ab4d3; }

.slider { display: flex; height: 37px; padding: 5px 0 0 323px; gap: 6px; }
.slider .arrow { width: 30px; }
.slider .thumb { flex: 1; display: flex; align-items: center; justify-content: center; height: 30px; margin-top: 1px; padding-left: 46px; border: 2px solid #a8b3bd; border-bottom-width: 3px; border-right: 0; background: linear-gradient(#eff4fa, #dbe5ee); }
.slider .thumb svg { width: 18px; height: 14px; }
.mass--small .slider { height: 32px; padding: 4px 0 0 282px; gap: 4px; }
.mass--small .slider .arrow { width: 27px; }
.mass--small .slider .thumb { height: 26px; margin-left: 2px; padding-left: 40px; }

/* Update task log */
.log {
  --bar-h: 52px; --bar-x: 23px; --bar-size: 25px; --bar-line: 46px;
  position: relative;
  margin-right: 2px;
  padding: 10px 0 0 12px;
  background: #fafbfe;
  font-size: 18px;
}
.log .toolbar { height: 56px; padding: 0 16px; gap: 28px; font-size: 19px; }
.log .tool { gap: 3px; }
.log .tool svg { width: 24px; height: 22px; }
.log .tool .ic-pencil { width: 22px; height: 26px; }
.saved { height: 92px; padding: 18px 0 0 8px; background: var(--paper); line-height: 28px; }
.totals { display: flex; height: 33px; padding-left: 5px; background: var(--paper); line-height: 32px; }
.totals dt { height: 32px; padding-left: 2px; border-bottom: 2px solid var(--line); }
.totals dd { width: 73px; padding-left: 5px; }
.t-err { width: 82px; }
.t-warn { width: 93px; }
.t-info { width: 135px; }
.status { margin-left: 2px; border-top: 2px solid var(--blue); border-left: 2px solid var(--blue); background: var(--paper); padding: 2px 0 0 1px; }
.status-title { height: 36px; padding-left: 22px; border-bottom: 2px solid #edf3f9; background: linear-gradient(#cbdbea, #abc3da); line-height: 32px; }
.status-body { display: flex; }
.messages { flex: 1; min-width: 0; }
.m-sel { width: 27px; } .m-icon { width: 49px; } .m-note { width: 64px; }
.messages th { height: 36px; padding-left: 4px; background: linear-gradient(#e0e4e9, #cfd3da 60%, #d6dade); border-right: 2px solid #b3bac4; border-bottom: 2px solid #abb3bd; font-size: 19px; }
.messages th:last-child { padding-left: 3px; font-size: 18px; }
.messages td { height: 36px; padding-left: 1px; border-right: 2px solid var(--line); border-bottom: 2px solid var(--line); background: var(--pale); }
.messages th:last-child, .messages td:last-child { border-right: 0; }
.messages .blank td { background: var(--paper); }
.messages .cut td { height: 6px; border-bottom: 0; }
.messages td.sel { background: linear-gradient(#dcdfe4, #c3c8d0); border-color: #a0a8b2; }
.messages td svg { width: 41px; height: 18px; margin-left: 3px; }
.vscroll { width: 27px; display: flex; flex-direction: column; align-items: stretch; background: #fafcff; }
.vscroll .config { display: flex; justify-content: flex-end; height: 36px; padding: 3px 2px 0 0; background: #d8dce1; }
.vscroll .config svg { width: 22px; height: 26px; }
.vscroll .arrow { height: 31px; }
.vscroll .thumb { display: flex; align-items: center; justify-content: center; height: 72px; margin: 2px 1px 0 4px; border: 2px solid #a8b3bd; border-radius: 2px; background: linear-gradient(to right, #eff4fa, #dbe5ee); }
.vscroll .thumb svg { width: 14px; height: 18px; }
```
